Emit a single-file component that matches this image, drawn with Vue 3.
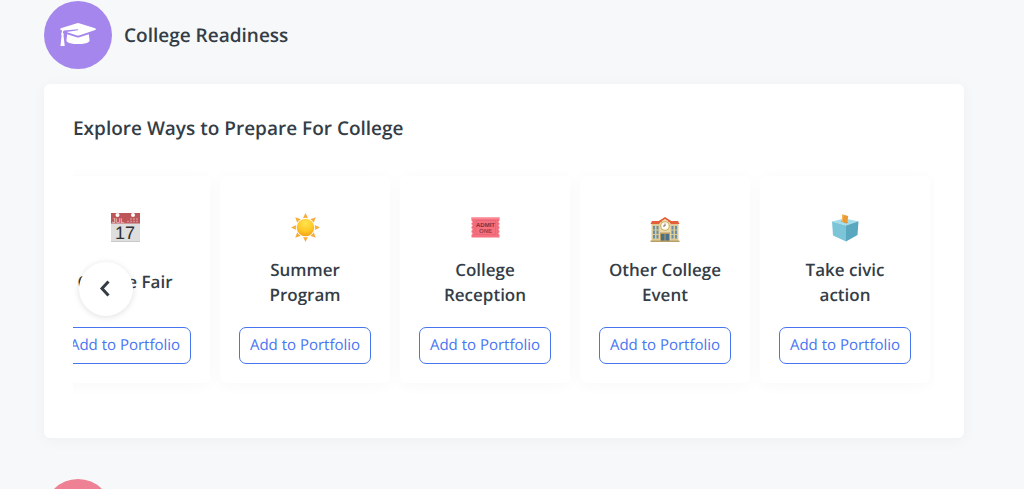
<script setup>
const cards = [
  { icon: 'calendar', title: 'College Fair' },
  { icon: 'sun', title: 'Summer Program' },
  { icon: 'ticket', title: 'College Reception' },
  { icon: 'school', title: 'Other College Event' },
  { icon: 'ballot', title: 'Take civic action' },
]
const rays = [0, 45, 90, 135, 180, 225, 270, 315]
</script>

<template>
  <main class="page">
    <section class="section">
      <header class="section-head">
        <span class="badge purple">
          <svg width="38" height="26" viewBox="0 0 38 26" aria-hidden="true">
            <path fill="#fff" d="M18 1.200Q19 .9 20 1.200L36.200 6.300Q37.800 7.200 36.200 8.100L20 13.400Q19 13.700 18 13.400L7.500 10 19 8.300Q19.700 7.500 18.900 7.200L5 8.600Q3.900 9.200 3.900 10.800Q5.400 12 4.500 13.400L5.700 23.500Q5.700 24 5.200 24H2Q1.400 24 1.500 23.400L2.600 13.400Q1.600 12 2.600 10.800Q2.700 9.300 3.200 8.500L1.800 8Q.5 7.200 1.800 6.300Z" />
            <path fill="#fff" d="M8.200 12.200 17.500 15.300Q19 15.800 20.500 15.300L29.800 12.200 30.600 18.400C30.600 23.200 7.400 23.200 7.400 18.400Z" />
          </svg>
        </span>
        <h2>College Readiness</h2>
      </header>

      <div class="panel">
        <h3>Explore Ways to Prepare For College</h3>
        <div class="carousel">
          <ul class="track">
            <li v-for="card in cards" :key="card.title" class="card">
              <svg v-if="card.icon === 'calendar'" class="icon" viewBox="0 0 30 30" aria-hidden="true">
                <path fill="#dededf" d="M1 10h29v20H1z" />
                <path fill="#bd5659" d="M1 1h29v10.500H1z" />
                <path fill="#c9c9cb" d="M1 29h29v1H1z" />
                <circle cx="7.500" cy="3" r="2" fill="#fff" />
                <circle cx="23" cy="3" r="2" fill="#fff" />
                <path stroke="#eee" stroke-width="1.200" d="M7.500 0v3M23 0v3" />
                <text class="month" x="2" y="11" font-size="7" fill="#f3d9da">JUL</text>
                <path stroke="#d28c8e" stroke-width="1.400" stroke-dasharray="2 1" d="M17 9.500h11M20 7h8" />
                <text class="day" x="15" y="27" font-size="18" text-anchor="middle" fill="#303033">17</text>
              </svg>

              <svg v-else-if="card.icon === 'sun'" class="icon" viewBox="0 0 30 30" aria-hidden="true">
                <defs>
                  <radialGradient id="sun-fill" cx=".5" cy=".25" r=".75">
                    <stop offset="0" stop-color="#ffe34e" />
                    <stop offset=".6" stop-color="#ffc928" />
                    <stop offset="1" stop-color="#f3a116" />
                  </radialGradient>
                </defs>
                <path v-for="angle in rays" :key="angle" fill="#f6ac38" d="M15.500 1 18 6.300Q15.500 5.300 13 6.300Z" :transform="`rotate(${angle} 15.500 15.500)`" />
                <circle cx="15.500" cy="15.500" r="8.700" fill="url(#sun-fill)" />
              </svg>

              <svg v-else-if="card.icon === 'ticket'" class="icon" viewBox="0 0 30 30" aria-hidden="true">
                <path fill="#f6717f" d="M1.500 5.500h28V9a1 1 0 0 0 0 2v1.500a1 1 0 0 0 0 2v2a1 1 0 0 0 0 2v2a1 1 0 0 0 0 2V25.500h-28v-3a1 1 0 0 0 0-2v-2a1 1 0 0 0 0-2v-2a1 1 0 0 0 0-2V11a1 1 0 0 0 0-2z" />
                <path fill="#fa8b96" d="M1.500 5.500h28V7h-28z" />
                <path fill="none" stroke="#e76273" stroke-width=".7" d="M6 8.500h19.500v14H6z" />
                <path stroke="#e76273" stroke-width=".8" stroke-dasharray="1 1" d="M4 7.500v16M27.500 7.500v16" />
                <text class="ticket-text" x="15.500" y="15" font-size="6" text-anchor="middle" fill="#79303c">ADMIT</text>
                <text class="ticket-text" x="15.500" y="21" font-size="6" text-anchor="middle" fill="#9a3f4c">ONE</text>
              </svg>

              <svg v-else-if="card.icon === 'school'" class="icon" viewBox="0 0 30 30" aria-hidden="true">
                <path fill="#dccb98" d="M1.500 11h27v18h-27z" />
                <path fill="#e3603b" d="M2 9h26l1.500 3H.5z" />
                <path fill="#eadcad" d="M9.500 11 15 7l5.500 4v18h-11z" />
                <path fill="#e55d35" d="m8 9.500 7-4.500 7 4.500v2l-7-4.500-7 4.500z" />
                <circle cx="15" cy="14" r="4.800" fill="#cfb064" />
                <circle cx="15" cy="14" r="3.700" fill="#fffdf3" />
                <path fill="none" stroke="#4b4b4b" stroke-width=".8" d="M15 11.500V14h-2" />
                <path fill="#688fa3" d="M3 14h2v3.500H3zm3.500 0h2v3.500h-2zM3 18.500h2V22H3zm3.500 0h2V22h-2zM3 23h2v3.500H3zm3.500 0h2v3.500h-2zM21.500 14h2v3.500h-2zm3.500 0h2v3.500h-2zm-3.500 4.500h2V22h-2zm3.500 0h2V22h-2zM21.500 23h2v3.500h-2zm3.500 0h2v3.500h-2z" />
                <path fill="#bb9c61" d="M10 20.500h10V29H10z" />
                <path fill="#4a7188" d="M11 22h3.500v7H11zm4.500 0H19v7h-3.500z" />
                <path fill="#b99e65" d="M.5 28.500h29V30H.5z" />
              </svg>

              <svg v-else class="icon" viewBox="0 0 30 30" aria-hidden="true">
                <path fill="#a5deea" d="m2 9.500 12-3 14.500 2.700L16 13.500z" />
                <path fill="#7cc5d9" d="M2 9.500 16 13.500v16L3 23.500z" />
                <path fill="#5aa7c0" d="M28.500 9.200 27.500 23 16 29.500v-16z" />
                <path fill="#397c94" d="m11 9.300 5.500 1.900 1.500-.8-5.500-1.800z" />
                <path fill="#eb9a34" d="m12.300 2.500 5.900 1.500-.8 6.400-1 1-4.600-1.900z" />
                <path fill="#f7b75c" d="m12.300 2.500 1.300.4-.8 6.900-1-.3z" />
              </svg>

              <h4>{{ card.title }}</h4>
              <button type="button" class="add">Add to Portfolio</button>
            </li>
          </ul>
          <button type="button" class="previous" aria-label="Previous">
            <svg width="12" height="18" viewBox="0 0 12 18" aria-hidden="true">
              <path d="M9.500 1.500 3 8.500l6.500 7" fill="none" stroke="#343d46" stroke-width="3" />
            </svg>
          </button>
        </div>
      </div>
    </section>

    <section class="section">
      <header class="section-head">
        <span class="badge pink"></span>
      </header>
    </section>
  </main>
</template>

<style>
html {
  background: #f6f8fa;
  scrollbar-width: none;
}
</style>

<style scoped>
.page {
  padding: 1px 60px 0 44px;
  color: #343d46;
  font-family: "Open Sans", "Noto Sans", sans-serif;
  text-rendering: geometricPrecision;
}
.section {
  margin-bottom: 41px;
}
.section-head {
  display: flex;
  align-items: center;
  gap: 12px;
  margin-bottom: 15px;
}
.badge {
  display: flex;
  align-items: center;
  justify-content: center;
  width: 68px;
  height: 68px;
  border-radius: 50%;
}
.purple {
  background: #a586ec;
}
.pink {
  background: #ee8294;
}
h2,
h3,
h4 {
  margin: 0;
  font-weight: 600;
}
h2,
h3 {
  font-size: 19px;
  line-height: 28px;
}
.panel {
  padding: 30px 29px 35px;
  border-radius: 6px;
  background: #fff;
  box-shadow: 0 2px 15px rgba(0, 0, 0, 0.04);
}
.carousel {
  position: relative;
  margin-top: 24px;
}
.track {
  display: flex;
  justify-content: flex-end;
  gap: 10px;
  margin: 0;
  padding: 10px 5px 20px 0;
  overflow: hidden;
  list-style: none;
}
.card {
  display: flex;
  flex: 0 0 170px;
  flex-direction: column;
  align-items: center;
  box-sizing: border-box;
  padding: 36px 19px 19px;
  border-radius: 6px;
  background: #fff;
  box-shadow: 0 2px 15px rgba(0, 0, 0, 0.03);
}
.icon {
  width: 30px;
  height: 30px;
  overflow: visible;
}
.day,
.month {
  font-family: "Liberation Sans", Arial, sans-serif;
}
.ticket-text {
  font-family: "Liberation Sans", Arial, sans-serif;
  font-weight: 700;
}
h4 {
  display: flex;
  align-items: center;
  min-height: 51px;
  margin: 14px 0 20px;
  font-size: 17px;
  line-height: 25px;
  text-align: center;
}
.add {
  width: 100%;
  height: 37px;
  padding: 0 0 2px;
  border: 1px solid #4775f0;
  border-radius: 7px;
  background: #fff;
  color: #4775f0;
  font: 400 15px/20px "Open Sans", "Noto Sans", sans-serif;
  text-rendering: inherit;
  white-space: nowrap;
}
.previous {
  position: absolute;
  top: 96px;
  left: 6px;
  display: flex;
  align-items: center;
  justify-content: center;
  width: 54px;
  height: 54px;
  padding: 0 2px 0 0;
  border: 0;
  border-radius: 50%;
  background: #fff;
  box-shadow: 0 1px 6px rgba(0, 0, 0, 0.13);
}
</style>
